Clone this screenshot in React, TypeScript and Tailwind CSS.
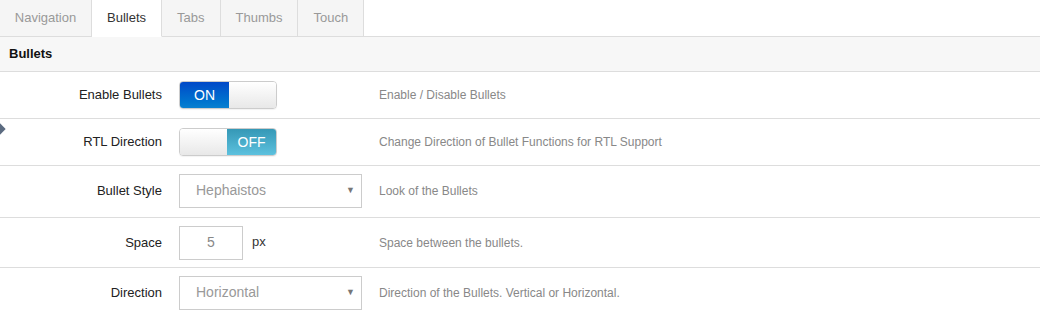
import React from "react";

const font = { fontFamily: '"Liberation Sans", Arial, sans-serif' };

function Toggle({ on }: { on: boolean }) {
  return (
    <div className="flex h-[28px] w-[98px] overflow-hidden rounded-[4px] border border-[#cccccc] shadow-[0_1px_1px_rgba(0,0,0,0.05)]">
      {on ? (
        <>
          <div className="flex w-[49px] items-center justify-center bg-gradient-to-b from-[#0048c8] to-[#0a80d0] text-[14px] text-white">ON</div>
          <div className="flex-1 bg-gradient-to-b from-[#ffffff] to-[#e8e8e8]" />
        </>
      ) : (
        <>
          <div className="flex-1 bg-gradient-to-b from-[#ffffff] to-[#e8e8e8]" />
          <div className="flex w-[49px] items-center justify-center bg-gradient-to-b from-[#3598b6] to-[#5cc1de] text-[14px] text-white">OFF</div>
        </>
      )}
    </div>
  );
}

function Select({ value }: { value: string }) {
  return (
    <div className="flex h-[34px] w-[183px] items-center justify-between border border-[#cccccc] bg-white pl-[16px] pr-[6px] text-[14px] text-[#999999]">
      <span>{value}</span>
      <span className="text-[9px] text-[#777777]">▼</span>
    </div>
  );
}

function Row({
  label,
  desc,
  h,
  children,
  marker,
}: {
  label: string;
  desc: string;
  h: string;
  children: React.ReactNode;
  marker?: boolean;
}) {
  return (
    <div className={`relative flex items-center border-b border-[#dddddd] ${h}`}>
      {marker && <span className="absolute left-[-4px] top-[6px] h-[8px] w-[8px] rotate-45 bg-[#5b6b80]" />}
      <div className="w-[162px] text-right text-[13px] text-[#222222]">{label}</div>
      <div className="ml-[17px] flex w-[200px] items-center">{children}</div>
      <div className="text-[12px] text-[#888888]">{desc}</div>
    </div>
  );
}

export default function App() {
  const tabs = ["Navigation", "Bullets", "Tabs", "Thumbs", "Touch"];
  return (
    <div className="h-[318px] w-[1040px] overflow-hidden bg-white" style={font}>
      <div className="flex h-[37px] border-b border-[#dddddd]">
        {tabs.map((t) => {
          const active = t === "Bullets";
          return (
            <div
              key={t}
              className={`-mb-px flex h-[37px] items-center border-r border-[#dddddd] px-[15px] text-[13px] ${
                active ? "border-b border-b-white bg-white text-[#333333]" : "border-b border-b-[#dddddd] bg-[#f5f5f5] text-[#999999]"
              } ${t === "Navigation" ? "w-[92px] justify-center" : ""}`}
            >
              {t}
            </div>
          );
        })}
      </div>
      <div className="flex h-[35px] items-center border-b border-[#dddddd] bg-[#f7f7f7] pl-[9px] text-[13px] font-bold text-[#111111]">
        Bullets
      </div>
      <Row label="Enable Bullets" desc="Enable / Disable Bullets" h="h-[47px]">
        <Toggle on />
      </Row>
      <Row label="RTL Direction" desc="Change Direction of Bullet Functions for RTL Support" h="h-[47px]" marker>
        <Toggle on={false} />
      </Row>
      <Row label="Bullet Style" desc="Look of the Bullets" h="h-[52px] pb-[2px]">
        <Select value="Hephaistos" />
      </Row>
      <Row label="Space" desc="Space between the bullets." h="h-[50px]">
        <div className="flex h-[34px] w-[64px] items-center justify-center border border-[#cccccc] text-[14px] text-[#888888]">5</div>
        <span className="ml-[9px] -mt-[2px] text-[13px] text-[#333333]">px</span>
      </Row>
      <Row label="Direction" desc="Direction of the Bullets. Vertical or Horizontal." h="h-[56px] pb-[6px]">
        <Select value="Horizontal" />
      </Row>
    </div>
  );
}
